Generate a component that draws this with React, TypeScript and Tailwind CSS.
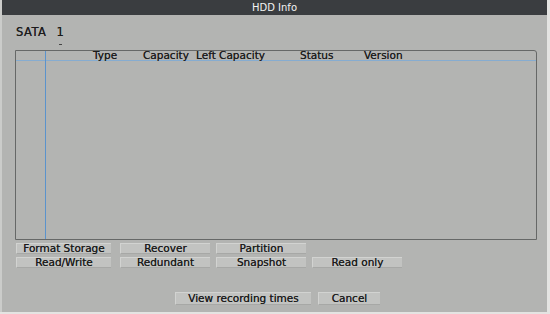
import React from 'react';

const columns = [
    { label: 'Type', w: 'w-[50px]' },
    { label: 'Capacity', w: 'w-[53px]' },
    { label: 'Left Capacity', w: 'w-[104px]' },
    { label: 'Status', w: 'w-[64px]' },
    { label: 'Version', w: 'w-[60px]' },
];

const Btn: React.FC<{ label: string; className?: string }> = ({ label, className = '' }) => (
    <div
        className={`h-[11px] flex items-center justify-center bg-[#c2c3c1] border-t border-l border-[#d2d3d1] border-b border-b-[#a7a8a6] text-[10.5px] leading-none text-[#1c1c1c] [text-shadow:0_0_0.5px_#333] ${className}`}
    >
        {label}
    </div>
);

export default function App() {
    return (
        <div className="w-[550px] h-[314px] bg-[#e4e4e2] font-['DejaVu_Sans',sans-serif]">
            <div className="w-[547px] h-[312px] bg-[#b3b4b2] border-l-2 border-[#cbccca] flex flex-col">
                {/* title bar */}
                <div className="h-[15px] bg-[#3a3d40] text-[#f2f2f2] text-[10px] leading-[15px] text-center">
                    HDD Info
                </div>

                {/* disk selector */}
                <div className="mt-[11px] pl-[14px] flex items-start text-[11.5px] leading-[13px] text-[#1c1c1c] [text-shadow:0_0_0.5px_#333]">
                    <span className="tracking-[0.5px]">SATA</span>
                    <div className="ml-[10px] flex flex-col items-center">
                        <span>1</span>
                        <span className="mt-[5px] w-[3px] h-[1px] bg-[#444]" />
                    </div>
                </div>

                {/* table */}
                <div className="mt-[5px] ml-[13px] w-[522px] h-[190px] border border-[#666867] rounded-tr-[3px] flex">
                    <div className="w-[30px] border-r border-[#5b93cc] flex flex-col">
                        <div className="h-[10px] border-b border-[#86acd0]" />
                    </div>
                    <div className="flex-1 flex flex-col">
                        <div className="h-[10px] border-b border-[#86acd0] flex items-center text-[10.5px] leading-none text-[#1c1c1c] [text-shadow:0_0_0.5px_#333]">
                            <div className="w-[47px]" />
                            {columns.map((c) => (
                                <div key={c.label} className={`${c.w} whitespace-nowrap`}>
                                    {c.label}
                                </div>
                            ))}
                        </div>
                    </div>
                </div>

                {/* storage buttons */}
                <div className="mt-[3px] pl-[14px] flex flex-col gap-[3px]">
                    <div className="flex">
                        <Btn label="Format Storage" className="w-[95px]" />
                        <Btn label="Recover" className="w-[90px] ml-[9px]" />
                        <Btn label="Partition" className="w-[90px] ml-[6px]" />
                    </div>
                    <div className="flex">
                        <Btn label="Read/Write" className="w-[95px]" />
                        <Btn label="Redundant" className="w-[90px] ml-[9px]" />
                        <Btn label="Snapshot" className="w-[90px] ml-[6px]" />
                        <Btn label="Read only" className="w-[90px] ml-[6px]" />
                    </div>
                </div>

                {/* footer */}
                <div className="mt-[24px] pl-[173px] flex gap-[7px]">
                    <Btn label="View recording times" className="w-[136px] h-[13px]" />
                    <Btn label="Cancel" className="w-[62px] h-[13px]" />
                </div>
            </div>
        </div>
    );
}
